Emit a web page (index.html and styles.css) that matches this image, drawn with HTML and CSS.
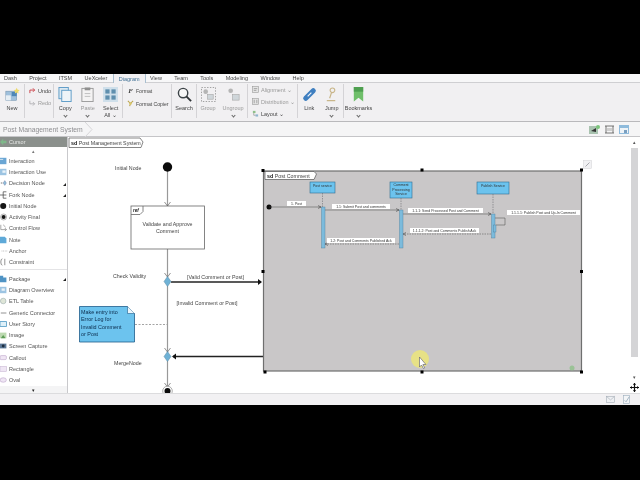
FILE: index.html

```html
<!DOCTYPE html>
<html lang="en">
<head>
  <meta charset="UTF-8" />
  <title>Post Management System</title>
  <link rel="stylesheet" href="styles.css">
</head>
<body>
  <div class="app">
    <nav class="tabs">
      <span>Dash</span><span>Project</span><span>ITSM</span><span>UeXceler</span>
      <span class="tab-active">Diagram</span>
      <span>View</span><span>Team</span><span>Tools</span><span>Modeling</span><span>Window</span><span>Help</span>
    </nav>

    <div class="ribbon">
      <div class="group group-new">
        <div class="tool">
          <svg class="tool-icon" viewBox="0 0 18 16"><rect x="1" y="4" width="13" height="11" fill="#9fc0dc" stroke="#6d8ba8" stroke-width=".6"/><rect x="1" y="9" width="6" height="6" fill="#e6eef4"/><rect x="8" y="5" width="6" height="5" fill="#4d87b8"/><path d="M14 0l1.2 2.2 2.4.4-1.7 1.7.4 2.4-2.3-1.1-2.2 1.1.4-2.4-1.7-1.7 2.4-.4z" fill="#ecd96a"/></svg>
          <span>New</span>
        </div>
      </div>
      <div class="group group-undo">
        <div class="row-tool"><svg class="mini" viewBox="0 0 8 8"><path d="M7 7V3.500H2M3.500 1.500L1.500 3.500 3.500 5.500" transform="matrix(-1 0 0 1 8 0)" fill="none" stroke="#c8343c" stroke-width="1"/></svg><span>Undo</span></div>
        <div class="row-tool muted"><svg class="mini" viewBox="0 0 8 8"><path d="M1 2v3.500h5M4.500 3.500l2 2-2 2" fill="none" stroke="#a8a8ac" stroke-width=".9"/></svg><span>Redo</span></div>
      </div>
      <div class="group group-clip">
        <div class="tool">
          <svg class="tool-icon" viewBox="0 0 16 16"><rect x="1" y="0.500" width="10" height="12" fill="#dce9f2" stroke="#5b9ac6"/><rect x="4" y="3.500" width="10" height="12" fill="#eef4f8" stroke="#5b9ac6"/></svg>
          <span>Copy</span><i class="caret"></i>
        </div>
        <div class="tool muted">
          <svg class="tool-icon" viewBox="0 0 16 16"><rect x="2" y="1.500" width="12" height="14" fill="#f4f3f3" stroke="#9a9a9a"/><rect x="5" y="0.500" width="6" height="3" fill="#8f8f8f"/><path d="M5 7h6M5 10h6" stroke="#bdbdbd"/></svg>
          <span>Paste</span><i class="caret"></i>
        </div>
        <div class="tool">
          <svg class="tool-icon" viewBox="0 0 16 16"><rect width="16" height="16" fill="#cfdfea"/><rect x="2.500" y="2.500" width="4.500" height="4.500" fill="#5f8fae"/><rect x="9" y="2.500" width="4.500" height="4.500" fill="#5f8fae"/><rect x="2.500" y="9" width="4.500" height="4.500" fill="#5f8fae"/><rect x="9" y="9" width="4.500" height="4.500" fill="#5f8fae"/></svg>
          <span>Select<br>All ⌄</span>
        </div>
      </div>
      <div class="group group-format">
        <div class="row-tool"><b class="format-f">F</b><span>Format</span></div>
        <div class="row-tool"><svg class="mini" viewBox="0 0 8 8"><path d="M1 1l3 3M7 1L4 4 3 7" fill="none" stroke="#b9a24c" stroke-width="1.200"/><circle cx="4" cy="4" r="1.500" fill="#d9c76a"/></svg><span>Format Copier</span></div>
      </div>
      <div class="group group-search">
        <div class="tool">
          <svg class="tool-icon" viewBox="0 0 16 16"><circle cx="6.500" cy="6.500" r="5" fill="#f6f6f6" stroke="#3c4347" stroke-width="1.500"/><path d="M10 10l5 5" stroke="#2e3336" stroke-width="2"/></svg>
          <span>Search</span>
        </div>
      </div>
      <div class="group group-arrange">
        <div class="tool muted">
          <svg class="tool-icon" viewBox="0 0 16 16"><rect x=".5" y=".5" width="15" height="15" fill="none" stroke="#9a9a9a" stroke-dasharray="1.500 1.500"/><circle cx="5" cy="5" r="2.500" fill="#b5b5b5"/><rect x="7" y="8" width="6" height="5" fill="#cfd6da" stroke="#a2a2a2" stroke-width=".6"/></svg>
          <span>Group</span>
        </div>
        <div class="tool muted">
          <svg class="tool-icon" viewBox="0 0 16 16"><circle cx="5" cy="4" r="2.500" fill="#b5b5b5"/><rect x="7" y="8" width="7" height="6" fill="#cfd6da" stroke="#a2a2a2" stroke-width=".6"/></svg>
          <span>Ungroup</span><i class="caret"></i>
        </div>
      </div>
      <div class="group group-align">
        <div class="row-tool muted"><svg class="mini" viewBox="0 0 8 8"><rect x=".5" y=".5" width="7" height="7" fill="#e4e4e4" stroke="#9c9c9c" stroke-width=".7"/><path d="M2 3h4M2 5h3" stroke="#8a8a8a" stroke-width=".8"/></svg><span>Alignment ⌄</span></div>
        <div class="row-tool muted"><svg class="mini" viewBox="0 0 8 8"><rect x=".5" y=".5" width="7" height="7" fill="#e4e4e4" stroke="#9c9c9c" stroke-width=".7"/><path d="M2.500 2v4M5.500 2v4" stroke="#8a8a8a" stroke-width=".8"/></svg><span>Distribution ⌄</span></div>
        <div class="row-tool"><svg class="mini" viewBox="0 0 8 8"><rect x="1" y="1" width="3" height="2.500" fill="#8fbf8a"/><rect x="4" y="5" width="3" height="2.500" fill="#8fb5cf"/><path d="M2 3.500V6h2" fill="none" stroke="#777" stroke-width=".6"/></svg><span>Layout ⌄</span></div>
      </div>
      <div class="group group-link">
        <div class="tool">
          <svg class="tool-icon" viewBox="0 0 16 16"><path d="M4 12l8-8" stroke="#3f7fc0" stroke-width="5.500" stroke-linecap="round"/><path d="M6 10l4-4" stroke="#eef3f8" stroke-width="1.400"/></svg>
          <span>Link</span>
        </div>
        <div class="tool">
          <svg class="tool-icon" viewBox="0 0 16 16"><circle cx="9" cy="3.500" r="2.500" fill="none" stroke="#c9b68a" stroke-width="1.200"/><path d="M8 6L6 12M3 14.500h9" stroke="#c9b68a" stroke-width="1.300"/></svg>
          <span>Jump</span><i class="caret"></i>
        </div>
      </div>
      <div class="group group-mark">
        <div class="tool">
          <svg class="tool-icon" viewBox="0 0 16 16"><path d="M3 0h10v15.500L8 11.500l-5 4z" fill="#6fbf6a"/><path d="M3 0h10v5H3z" fill="#4e9f50"/></svg>
          <span>Bookmarks</span><i class="caret"></i>
        </div>
      </div>
    </div>

    <div class="breadcrumb">
      <span class="crumb">Post Management System</span>
      <svg class="crumb-end" viewBox="0 0 8 15"><path d="M0 0l7 7.500L0 15" fill="none" stroke="#d6d5d8"/></svg>
      <div class="crumb-tools">
        <svg class="crumb-icon" viewBox="0 0 11 9"><rect y="1" width="9" height="8" fill="#a9c3b0"/><path d="M2 6l5-3v4z" fill="#333"/><circle cx="9" cy="2" r="2" fill="#7cc47c"/></svg>
        <svg class="crumb-icon" viewBox="0 0 11 9"><path d="M1 1h9M1 8h9M2 1v7M9 1v7" stroke="#555" fill="none" stroke-width=".8"/><rect x="3" y="3" width="5" height="3" fill="#cfcfcf"/></svg>
        <svg class="crumb-icon" viewBox="0 0 11 9"><rect width="10" height="9" fill="#8fbbdc"/><rect x="1" y="3" width="8" height="5" fill="#eef3f7"/><rect x="5" y="5" width="3" height="3" fill="#7a9fc0"/></svg>
      </div>
    </div>

    <div class="workspace">
      <aside class="palette">
        <div class="palette-cursor"><svg class="pal-icon" viewBox="0 0 10 10"><path d="M0 5l4-4v2.500h4v3H4V9z" fill="#7fb88a"/></svg>Cursor</div>
        <div class="palette-arrow">▴</div>
        <ul class="palette-list">
          <li><svg class="pal-icon" viewBox="0 0 10 10"><rect y="1" width="8" height="8" fill="#6aa6d4"/><path d="M0 3h4" stroke="#e8f2f8"/></svg>Interaction</li>
          <li><svg class="pal-icon" viewBox="0 0 10 10"><rect y="1" width="8" height="8" fill="#9cc4e2"/><rect x="3" y="3" width="4" height="3" fill="#e8f2f8"/></svg>Interaction Use</li>
          <li class="has-more"><svg class="pal-icon" viewBox="0 0 10 10"><path d="M6 2l2 3-2 3-2-3z" fill="#8fc0dc" stroke="#558" stroke-width=".4"/><path d="M1 5h2" stroke="#555"/></svg>Decision Node</li>
          <li class="has-more"><svg class="pal-icon" viewBox="0 0 10 10"><path d="M0 5h4M4 1v8M4 1h4M4 5h4M4 9h4" stroke="#444" fill="none" stroke-width=".9"/></svg>Fork Node</li>
          <li><svg class="pal-icon" viewBox="0 0 10 10"><circle cx="4" cy="5" r="3.800" fill="#151515"/></svg>Initial Node</li>
          <li><svg class="pal-icon" viewBox="0 0 10 10"><circle cx="4.500" cy="5" r="3.800" fill="#eee" stroke="#777" stroke-width=".6"/><circle cx="4.500" cy="5" r="2.500" fill="#151515"/></svg>Activity Final</li>
          <li><svg class="pal-icon" viewBox="0 0 10 10"><path d="M1 1v6h7M6 5l2 2-2 2M4 1l3 3" fill="none" stroke="#777" stroke-width=".8"/></svg>Control Flow</li>
          <li><svg class="pal-icon" viewBox="0 0 10 10"><path d="M0 1h6l2 2v6H0z" fill="#5ea9d8"/></svg>Note</li>
          <li><svg class="pal-icon" viewBox="0 0 10 10"><path d="M2 5h7" stroke="#aaa" stroke-dasharray="1 1"/></svg>Anchor</li>
          <li><svg class="pal-icon" viewBox="0 0 10 10"><path d="M3 1Q1 1 1 5t2 4M6 1v8" fill="none" stroke="#555" stroke-width=".8"/></svg>Constraint</li>
        </ul>
        <ul class="palette-list palette-second">
          <li class="has-more"><svg class="pal-icon" viewBox="0 0 10 10"><path d="M0 1h4v2h4v6H0z" fill="#4f93c4"/></svg>Package</li>
          <li><svg class="pal-icon" viewBox="0 0 10 10"><rect y="1" width="8" height="8" fill="#9cc4e2"/><path d="M2 3h4v3H2z" fill="#e8f2f8"/></svg>Diagram Overview</li>
          <li><svg class="pal-icon" viewBox="0 0 10 10"><circle cx="4" cy="5" r="3.500" fill="#dfe6d8" stroke="#9aa" stroke-width=".7"/></svg>ETL Table</li>
          <li><svg class="pal-icon" viewBox="0 0 10 10"><path d="M1 5h7" stroke="#777"/></svg>Generic Connector</li>
          <li><svg class="pal-icon" viewBox="0 0 10 10"><rect y="2" width="8" height="6" fill="#dff0f8" stroke="#4f9ac4"/></svg>User Story</li>
          <li><svg class="pal-icon" viewBox="0 0 10 10"><rect y="2" width="8" height="7" fill="#bcd9b0"/><path d="M1 9l3-4 3 4z" fill="#5c9c55"/></svg>Image</li>
          <li><svg class="pal-icon" viewBox="0 0 10 10"><rect y="2" width="8" height="6" fill="#5c7896"/><circle cx="4" cy="5" r="1.800" fill="#1d2e40"/></svg>Screen Capture</li>
          <li><svg class="pal-icon" viewBox="0 0 10 10"><rect y="2" width="8" height="5" rx="1.500" fill="#f0e6f4" stroke="#b9a0c8" stroke-width=".7"/></svg>Callout</li>
          <li><svg class="pal-icon" viewBox="0 0 10 10"><rect y="2" width="8" height="6" fill="#efe6f4" stroke="#c6b4d2" stroke-width=".7"/></svg>Rectangle</li>
          <li><svg class="pal-icon" viewBox="0 0 10 10"><ellipse cx="4" cy="5" rx="4" ry="2.800" fill="#efe6f4" stroke="#b9a0c8" stroke-width=".7"/></svg>Oval</li>
        </ul>
        <div class="palette-arrow palette-down">▾</div>
      </aside>

      <svg class="canvas" viewBox="68 137 560 256">
        <!-- diagram tab -->
        <path class="frame-tab" d="M69 147.500V138h71l3 4-2 5.500z"/>
        <text class="label" x="71" y="144.500"><tspan class="bold">sd</tspan> Post Management System</text>

        <!-- activity flow -->
        <path class="flow" d="M167.500 171v35M167.500 249v28M167.500 286v66M167.500 361v26"/>
        <path class="flow-head" d="M164.500 202l3 4 3-4M164.500 273l3 4 3-4M164.500 348l3 4 3-4M164.500 383l3 4 3-4"/>
        <circle class="node" cx="167.500" cy="167" r="4.700"/>
        <circle class="final-ring" cx="167.500" cy="391" r="4.800"/>
        <circle class="node" cx="167.500" cy="391" r="3"/>

        <text class="label" x="115" y="170">Initial Node</text>
        <text class="label" x="113" y="278">Check Validity</text>
        <text class="label" x="114" y="365">MergeNode</text>

        <rect class="activity" x="131" y="206" width="73.500" height="43"/>
        <path class="activity" d="M131 214.500h9l3-3v-5.500"/>
        <text class="label-ref" x="133" y="212">ref</text>
        <text class="label" x="167.500" y="225.500" text-anchor="middle">Validate and Approve</text>
        <text class="label" x="167.500" y="232.500" text-anchor="middle">Comment</text>

        <path class="edge" d="M171 282h90"/>
        <path class="edge-head" d="M258 279l4 3-4 3z"/>
        <path class="edge" d="M263 356.500h-90"/>
        <path class="edge-head" d="M176 353.500l-4 3 4 3z"/>
        <path class="decision" d="M167.500 276.500l3.500 5-3.500 5-3.500-5z"/>
        <path class="decision" d="M167.500 351.500l3.500 5-3.500 5-3.500-5z"/>
        <text class="label" x="187" y="279">[Valid Comment or Post]</text>
        <text class="label" x="176.500" y="305">[Invalid Comment or Post]</text>

        <!-- note -->
        <path class="note" d="M79.500 306.500h48l7 7v28.500h-55z"/>
        <path class="note-fold" d="M127.500 306.500v7h7"/>
        <path class="anchor" d="M135 324.500h32"/>
        <text class="note-text" x="81" y="313.500">Make entry into</text>
        <text class="note-text" x="81" y="321">Error Log for</text>
        <text class="note-text" x="81" y="328.500">Invalid Comment</text>
        <text class="note-text" x="81" y="336">or Post</text>

        <!-- post comment sub diagram -->
        <rect class="frame" x="263.500" y="171" width="318" height="200"/>
        <path class="frame-tab" d="M265 179.500V171.500h49l2.500 2.500-2.500 5.500z"/>
        <text class="label" x="267" y="177.500"><tspan class="bold">sd</tspan> Post Comment</text>

        <rect class="life" x="310" y="182" width="25" height="11"/>
        <rect class="life" x="390" y="182" width="22" height="16"/>
        <rect class="life" x="477" y="182" width="32" height="12"/>
        <text class="tiny" x="322.500" y="187" text-anchor="middle">Post service</text>
        <text class="tiny" x="401" y="186" text-anchor="middle">Comment</text>
        <text class="tiny" x="401" y="190.500" text-anchor="middle">Processing</text>
        <text class="tiny" x="401" y="195" text-anchor="middle">Service</text>
        <text class="tiny" x="493" y="187" text-anchor="middle">Publish Service</text>

        <path class="lifeline" d="M322.500 193v14M401 198v12M493 194v20"/>

        <circle class="node" cx="269" cy="207" r="2.500"/>
        <path class="msg" d="M269 207h52M325 210h74M403 214h88M495 218h10v7h-9"/>
        <path class="msg-back" d="M491 234h-88M399 244h-74"/>
        <path class="msg-head" d="M318 205.500l3 1.500-3 1.500M396 208.500l3 1.500-3 1.500M488 212.500l3 1.500-3 1.500M406 232.500l-3 1.500 3 1.500M328 242.500l-3 1.500 3 1.500"/>

        <rect class="bar" x="321.500" y="207" width="3.500" height="41"/>
        <rect class="bar" x="399.500" y="210" width="3.500" height="38"/>
        <rect class="bar" x="491.500" y="214" width="3.500" height="24"/>
        <rect class="bar" x="493.500" y="225" width="2.500" height="7"/>

        <rect class="tag" x="287" y="201" width="19" height="5"/>
        <rect class="tag" x="332" y="204" width="58" height="5"/>
        <rect class="tag" x="408" y="208" width="75" height="5"/>
        <rect class="tag" x="507" y="210" width="73" height="5"/>
        <rect class="tag" x="410" y="228" width="69" height="5"/>
        <rect class="tag" x="327" y="238" width="68" height="5"/>
        <text class="tiny" x="296.500" y="205" text-anchor="middle">1. Post</text>
        <text class="tiny" x="361" y="208" text-anchor="middle">1.1: Submit Post and comments</text>
        <text class="tiny" x="445.500" y="212" text-anchor="middle">1.1.1: Send Processed Post and Comment</text>
        <text class="tiny" x="543.500" y="214" text-anchor="middle">1.1.1.1: Publish Post and Up-In Comment</text>
        <text class="tiny" x="444.500" y="232" text-anchor="middle">1.1.1.2: Post and Comments Publish Ack</text>
        <text class="tiny" x="361" y="242" text-anchor="middle">1.2: Post and Comments Published Ack</text>

        <!-- selection handles -->
        <rect class="handle" x="261.500" y="169" width="3" height="3"/>
        <rect class="handle" x="420.500" y="168.500" width="3" height="3"/>
        <rect class="handle" x="580" y="168.500" width="3" height="3"/>
        <rect class="handle" x="261.500" y="270" width="3" height="3"/>
        <rect class="handle" x="580" y="270" width="3" height="3"/>
        <rect class="handle" x="263.500" y="370.500" width="3" height="3"/>
        <rect class="handle" x="420.500" y="370.500" width="3" height="3"/>
        <rect class="handle" x="580" y="370.500" width="3" height="3"/>
        <rect class="expand" x="583.500" y="160.500" width="8" height="8"/>
        <path class="expand-mark" d="M585.500 166.500l4-4"/>
        <circle class="resize-mark" cx="572" cy="368" r="2.500"/>

        <!-- mouse pointer -->
        <circle class="spot" cx="420" cy="359" r="9"/>
        <path class="pointer" d="M419.500 357v10l2-2 2 3.500 1.200-.7-1.800-3.300h3z"/>
      </svg>

      <div class="scrollbar">
        <div class="scroll-arrow">▴</div>
        <div class="scroll-thumb"></div>
        <div class="scroll-arrow">▾</div>
        <svg class="move" viewBox="0 0 9 9"><path d="M4.500 0v9M0 4.500h9" stroke="#111" stroke-width="1.200"/><path d="M4.500 0L3 2h3zM4.500 9L3 7h3zM0 4.500L2 3v3zM9 4.500L7 3v3z" fill="#111"/></svg>
      </div>
    </div>

    <footer class="statusbar">
      <svg class="status-icon" viewBox="0 0 10 8"><rect x=".5" y=".5" width="9" height="7" fill="#eef0f3" stroke="#a9b1ba" stroke-width=".7"/><path d="M.5.5l4.500 4 4.500-4" fill="none" stroke="#a9b1ba" stroke-width=".7"/></svg>
      <svg class="status-icon" viewBox="0 0 10 10"><rect x="1.500" y=".5" width="7" height="9" fill="#f3f5f7" stroke="#9fb0bf" stroke-width=".7"/><path d="M3 6l1.500 1.500L8 2" fill="none" stroke="#7b93a8" stroke-width=".7"/></svg>
    </footer>
  </div>
</body>
</html>
```

FILE: styles.css

```css
body {
  margin: 0;
  padding-top: 74px;
  height: 406px;
  background-color: #000;
  font-family: 'Liberation Sans', Arial, sans-serif;
  color: #444;
}

.app {
  width: 640px;
  height: 331px;
  background-color: #f1f0f2;
  display: flex;
  flex-direction: column;
  overflow: hidden;
  filter: blur(.45px);
}

.muted {
  color: #999;
}

/* menu tabs */
.tabs {
  height: 9px;
  flex-shrink: 0;
  display: flex;
  align-items: center;
  gap: 12.5px;
  padding-left: 4px;
  font-size: 5.5px;
  background-color: #f7f7f8;
  border-bottom: 1px solid #cfcfd2;
  box-sizing: border-box;
}

.tab-active {
  color: #3f6f94;
  margin: 0 -8px 0 -7px;
  padding: 0 5px;
  height: 10px;
  line-height: 10px;
  background-color: #f1f0f2;
  border: 1px solid #a9bfd0;
  border-bottom: 0;
  box-sizing: border-box;
}

/* ribbon */
.ribbon {
  height: 39px;
  flex-shrink: 0;
  display: flex;
  font-size: 5.5px;
  border-bottom: 1px solid #b9b9bc;
  box-sizing: border-box;
}

.group {
  display: flex;
  box-sizing: border-box;
  border-right: 1px solid #d4d3d6;
  margin: 1px 0 3px;
  justify-content: space-around;
}

.group-new { width: 25px; }
.group-undo { width: 29px; flex-direction: column; justify-content: flex-start; gap: 5px; padding: 3px 0 0 4px; }
.group-clip { width: 69px; }
.group-format { width: 49px; flex-direction: column; justify-content: flex-start; gap: 6px; padding: 3px 0 0 4px; font-size: 5.1px; }
.group-search { width: 25px; }
.group-arrange { width: 51px; }
.group-align { width: 50px; flex-direction: column; justify-content: flex-start; gap: 5px; padding: 2px 0 0 4px; }
.group-link { width: 46px; }
.group-mark { width: 29px; border-right: 0; }

.tool {
  display: flex;
  flex-direction: column;
  align-items: center;
  text-align: center;
  line-height: 6.5px;
  padding-top: 3px;
}

.tool-icon {
  width: 15px;
  height: 15px;
  margin-bottom: 3px;
  flex-shrink: 0;
}

.caret {
  width: 2px;
  height: 2px;
  margin-top: 2px;
  border-right: 1px solid #666;
  border-bottom: 1px solid #666;
  transform: rotate(45deg);
}

.row-tool {
  display: flex;
  align-items: center;
  gap: 2px;
  height: 7px;
  white-space: nowrap;
}

.mini {
  width: 7px;
  height: 7px;
  flex-shrink: 0;
}

.format-f {
  width: 7px;
  font: italic bold 7px 'Liberation Serif', serif;
  text-align: center;
}

/* breadcrumb */
.breadcrumb {
  height: 15px;
  flex-shrink: 0;
  display: flex;
  align-items: center;
  padding-left: 3px;
  background-color: #f5f5f6;
  border-bottom: 1px solid #c5c5c8;
  box-sizing: border-box;
}

.crumb {
  font-size: 6.8px;
  color: #8f8f92;
}

.crumb-end {
  width: 8px;
  height: 15px;
  margin-left: 2px;
}

.crumb-tools {
  margin-left: auto;
  margin-right: 10px;
  display: flex;
  gap: 4px;
}

.crumb-icon {
  width: 11px;
  height: 9px;
}

/* palette and canvas */
.workspace {
  height: 256px;
  flex-shrink: 0;
  display: flex;
  background-color: #fff;
}

.palette {
  width: 68px;
  flex-shrink: 0;
  font-size: 5.5px;
  background-color: #fff;
  border-right: 1px solid #c9c9cc;
  box-sizing: border-box;
  color: #555;
}

.palette-cursor {
  height: 10px;
  display: flex;
  align-items: center;
  gap: 1px;
  background-color: #8b908c;
  color: #e4e6e4;
}

.palette-arrow {
  height: 8px;
  line-height: 8px;
  text-align: center;
  font-size: 5px;
  color: #777;
}

.palette-down {
  height: 7px;
  color: #222;
  background-color: #f4f4f5;
}

.palette-list {
  list-style: none;
  margin: 0;
  padding: 0;
}

.palette-list li {
  height: 11.3px;
  display: flex;
  align-items: center;
  gap: 1px;
  white-space: nowrap;
  position: relative;
}

.palette-second {
  padding-top: 3px;
  margin-top: 1px;
  border-top: 1px solid #e4e4e6;
}

.has-more::after {
  content: "";
  position: absolute;
  right: 1px;
  bottom: 3px;
  border-left: 3px solid transparent;
  border-bottom: 3px solid #222;
}

.pal-icon {
  width: 8px;
  height: 8px;
  flex-shrink: 0;
}

.canvas {
  width: 560px;
  height: 256px;
  flex-shrink: 0;
}

.label {
  font-size: 5.3px;
  fill: #444;
}

.bold {
  font-weight: 700;
  fill: #111;
}

.label-ref {
  font: italic bold 4.6px 'Liberation Sans', sans-serif;
  fill: #222;
}

.tiny {
  font-size: 3.5px;
  fill: #333;
}

.note-text {
  font-size: 5.4px;
  fill: #0c2c4c;
}

.flow { stroke: #999; stroke-width: 1.2; fill: none; }
.flow-head { stroke: #666; stroke-width: .7; fill: none; }
.node { fill: #0b0b0b; }
.final-ring { fill: #fff; stroke: #777; stroke-width: .6; }
.activity { fill: #fff; stroke: #666; stroke-width: .8; }
.activity + .activity { fill: none; }
.edge { stroke: #222; stroke-width: 1.5; fill: none; }
.edge-head { fill: #111; }
.decision { fill: #6fb2d6; stroke: #5c88a2; stroke-width: .5; }
.note { fill: #6cc3ee; stroke: #1f5d8c; stroke-width: .8; }
.note-fold { fill: #eaf5fb; stroke: #1f5d8c; stroke-width: .6; }
.anchor { stroke: #666; stroke-width: .6; stroke-dasharray: 2 1.500; }
.frame { fill: #c9c7c8; stroke: #6f6f6f; stroke-width: 1.2; }
.frame-tab { fill: #fff; stroke: #555; stroke-width: .7; }
.life { fill: #6cc3ee; stroke: #2f6d92; stroke-width: .6; }
.lifeline { stroke: #6b6f73; stroke-width: .6; stroke-dasharray: 1.500 1; }
.msg { stroke: #444; stroke-width: .5; fill: none; }
.msg-back { stroke: #444; stroke-width: .5; stroke-dasharray: 1.500 1; fill: none; }
.msg-head { stroke: #333; stroke-width: .5; fill: none; }
.bar { fill: #7cbbdc; stroke: #4e7f9c; stroke-width: .4; }
.tag { fill: #fff; }
.handle { fill: #000; }
.expand { fill: #f1f1f3; stroke: #cfcfd4; stroke-width: .5; }
.expand-mark { stroke: #8a8a90; stroke-width: .7; }
.resize-mark { fill: #8fc08a; opacity: .8; }
.spot { fill: #f0ea70; opacity: .75; }
.pointer { fill: #fff; stroke: #55566a; stroke-width: .6; }

/* scrollbar */
.scrollbar {
  width: 12px;
  flex-shrink: 0;
  display: flex;
  flex-direction: column;
  align-items: center;
  background-color: #fff;
}

.scroll-arrow {
  height: 11px;
  line-height: 11px;
  font-size: 5px;
  color: #555;
}

.scroll-thumb {
  width: 7px;
  height: 209px;
  background-color: #d4d4d6;
}

.scrollbar .scroll-arrow:nth-child(3) {
  margin-top: 15px;
}

.move {
  width: 9px;
  height: 9px;
}

/* status bar */
.statusbar {
  flex: 1;
  display: flex;
  justify-content: flex-end;
  align-items: center;
  gap: 7px;
  padding-right: 9px;
  background-color: #f2f1f3;
  border-top: 1px solid #dcdcde;
}

.status-icon {
  width: 9px;
  height: 9px;
}
```
